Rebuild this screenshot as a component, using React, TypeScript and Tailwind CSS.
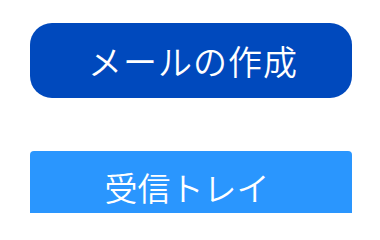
import React from "react";

export default function App() {
  const font = {
    fontFamily: '"Noto Sans CJK JP", "Noto Sans", sans-serif',
  };
  return (
    <div className="w-[380px] h-[213px] overflow-hidden bg-white">
      <div className="flex flex-col pt-[23px] pl-[30px] pr-[28px] gap-[53px]" style={font}>
        <div className="h-[75px] rounded-[22px] bg-[#0049bd] flex items-center justify-center text-white text-[34px] leading-none">
          <span className="font-[350] ml-[4px] tracking-[1px]">メールの作成</span>
        </div>
        <div className="h-[80px] rounded-[4px] bg-[#2a96fe] flex items-start justify-center text-white text-[33px] leading-none">
          <span className="mt-[20px] mr-[8px] font-[350]">受信トレイ</span>
        </div>
      </div>
    </div>
  );
}
